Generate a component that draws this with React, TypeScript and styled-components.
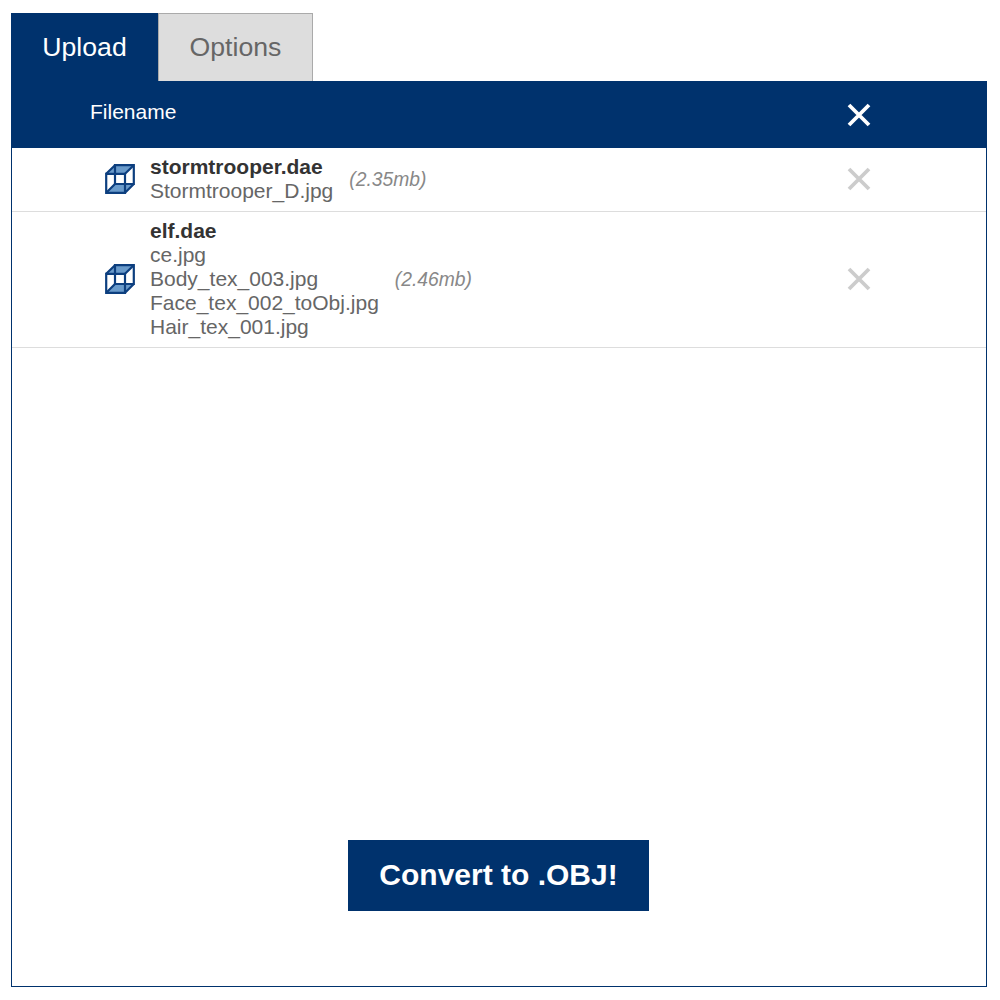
import styled, { createGlobalStyle } from 'styled-components';

const GlobalStyle = createGlobalStyle`
  html, body {
    margin: 0;
    padding: 0;
    background: #ffffff;
    font-family: "Liberation Sans", Arial, sans-serif;
  }
`;

const Page = styled.div`
  width: 976px;
  padding: 13px 0 0 11px;
`;

const Tabs = styled.div`
  display: flex;
  height: 68px;
`;

const Tab = styled.div<{ $active?: boolean }>`
  box-sizing: border-box;
  width: ${props => (props.$active ? '147px' : '155px')};
  display: flex;
  align-items: center;
  justify-content: center;
  font-size: 26.67px;
  color: ${props => (props.$active ? '#ffffff' : '#666666')};
  background: ${props => (props.$active ? '#00326d' : '#dddddd')};
  border: ${props => (props.$active ? 'none' : '1px solid #aaaaaa')};
  border-bottom: none;
`;

const Panel = styled.div`
  box-sizing: border-box;
  height: 906px;
  border: 1px solid #00326d;
  border-top: none;
  display: flex;
  flex-direction: column;
`;

const Header = styled.div`
  display: flex;
  align-items: center;
  height: 67px;
  margin: 0 -1px;
  background: #00326d;
`;

const HeaderLabel = styled.div`
  margin-left: 79px;
  width: 757px;
  padding-bottom: 5px;
  font-size: 21px;
  color: #ffffff;
`;

const Row = styled.div<{ $height: number }>`
  box-sizing: border-box;
  display: flex;
  align-items: center;
  height: ${props => props.$height}px;
  padding-bottom: 1px;
  border-bottom: 1px solid #dddddd;
`;

const CubeCell = styled.div`
  width: 138px;
  padding-left: 93px;
  box-sizing: border-box;
  display: flex;
  align-items: center;
`;

const FileList = styled.div`
  font-size: 21px;
  line-height: 24px;
  color: #666666;
`;

const MainFile = styled.div`
  font-weight: 700;
  color: #333333;
`;

const Size = styled.div`
  margin: 2px 0 0 16px;
  font-size: 19.3px;
  font-style: italic;
  color: #888888;
`;

const RemoveCell = styled.div`
  margin-left: auto;
  width: 139px;
  display: flex;
  align-items: center;
`;

const Footer = styled.div`
  flex: 1;
  display: flex;
  justify-content: center;
  padding-top: 492px;
`;

const ConvertButton = styled.button`
  width: 301px;
  height: 71px;
  margin-right: 1px;
  padding: 0 0 2px;
  border: none;
  background: #00326d;
  color: #ffffff;
  font-family: inherit;
  font-size: 30px;
  font-weight: 700;
`;

const Cube = () => (
  <svg width="30" height="30" viewBox="0 0 30 30">
    <path d="M1 10 L10 1 H29 L20 10 Z" fill="#6a9bcb" />
    <path d="M1 29 L10 20 H29 L20 29 Z" fill="#6a9bcb" />
    <g fill="none" stroke="#0d3f7f" strokeWidth="2.2">
      <path d="M1.2 9.8 H20 V28.8 H1.2 Z" />
      <path d="M10 1.2 H28.8 V20 H10 Z" />
      <path d="M1.2 9.8 L10 1.2 M20 9.8 L28.8 1.2 M20 28.8 L28.8 20 M1.2 28.8 L10 20" />
    </g>
  </svg>
);

const Cross = ({ color }: { color: string }) => (
  <svg width="24" height="24" viewBox="0 0 24 24">
    <path d="M2 2 L22 22 M22 2 L2 22" stroke={color} strokeWidth="3.8" fill="none" />
  </svg>
);

const files = [
  { main: 'stormtrooper.dae', extras: ['Stormtrooper_D.jpg'], size: '(2.35mb)', height: 64 },
  {
    main: 'elf.dae',
    extras: ['ce.jpg', 'Body_tex_003.jpg', 'Face_tex_002_toObj.jpg', 'Hair_tex_001.jpg'],
    size: '(2.46mb)',
    height: 136,
  },
];

export default function App() {
  return (
    <Page>
      <GlobalStyle />
      <Tabs>
        <Tab $active>Upload</Tab>
        <Tab>Options</Tab>
      </Tabs>
      <Panel>
        <Header>
          <HeaderLabel>Filename</HeaderLabel>
          <Cross color="#ffffff" />
        </Header>
        {files.map(file => (
          <Row key={file.main} $height={file.height}>
            <CubeCell>
              <Cube />
            </CubeCell>
            <FileList>
              <MainFile>{file.main}</MainFile>
              {file.extras.map(name => (
                <div key={name}>{name}</div>
              ))}
            </FileList>
            <Size>{file.size}</Size>
            <RemoveCell>
              <Cross color="#cccccc" />
            </RemoveCell>
          </Row>
        ))}
        <Footer>
          <ConvertButton>Convert to .OBJ!</ConvertButton>
        </Footer>
      </Panel>
    </Page>
  );
}
